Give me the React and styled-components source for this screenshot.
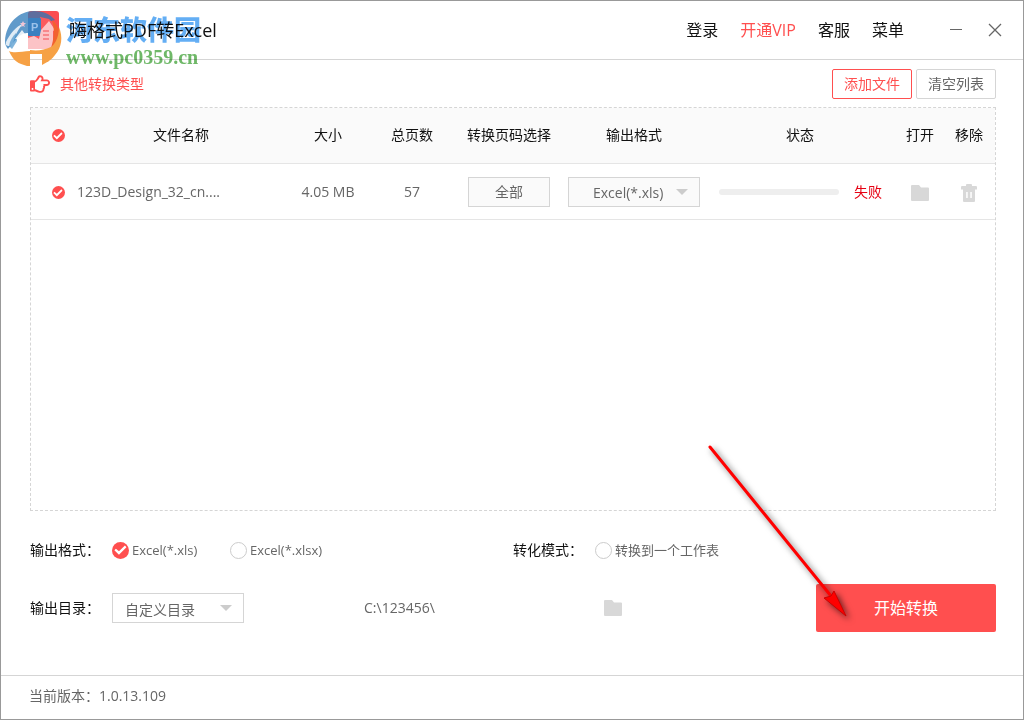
import React, { useState } from 'react';
import styled, { createGlobalStyle } from 'styled-components';
import { FaRegHandPointRight } from 'react-icons/fa';

const columns = [
    { title: '文件名称' },
    { title: '大小', width: 86 },
    { title: '总页数', width: 82 },
    { title: '转换页码选择', width: 112 },
    { title: '输出格式', width: 138 },
    { title: '状态', width: 194 },
    { title: '打开', width: 46 },
    { title: '移除', width: 52 },
];

const files = [
    { id: 1, name: '123D_Design_32_cn....', size: '4.05 MB', pages: 57, progress: 0, status: '失败' },
];

const FolderIcon = () => (
    <svg width="18" height="16" viewBox="0 0 18 16" aria-hidden="true">
        <path d="M1 0h7l2 2.500h7a1 1 0 0 1 1 1V15a1 1 0 0 1-1 1H1a1 1 0 0 1-1-1V1a1 1 0 0 1 1-1z" fill="currentColor" />
    </svg>
);

const TrashIcon = () => (
    <svg width="16" height="18" viewBox="0 0 16 18" aria-hidden="true">
        <path
            fillRule="evenodd"
            d="M6 0h4a1 1 0 0 1 1 1v1h4a1 1 0 0 1 1 1v2.500h-2V17a1 1 0 0 1-1 1H3a1 1 0 0 1-1-1V5.500H0V3a1 1 0 0 1 1-1h4V1a1 1 0 0 1 1-1zM5.200 8v6h1.500V8zM9.300 8v6h1.500V8z"
            fill="currentColor"
        />
    </svg>
);

const Logo = () => (
    <svg width="62" height="58" viewBox="4 10 62 58" aria-hidden="true">
        <rect x="28" y="11" width="31" height="38" rx="3" fill="#fb4d50" />
        <path d="M5 41C6 23 19 11 34 11c9 0 16 3 21 9l-13 4-14 9C20 32 15 41 8 49c-2-2-3-5-3-8z" fill="#2b78b8" opacity=".75" />
        <path d="M6 42c4-8 9-15 18-19-6 6-9 12-11 21-2 2-5 3-7 1z" fill="#fff" opacity=".8" />
        <path d="M9 46c1-6 4-10 7-13l1 8-5 8z" fill="#4a94cc" opacity=".7" />
        <path d="M28 33l12 1V17l9 2 8 8v19a3 3 0 0 1-3 3H28z" fill="#fb5a5e" />
        <rect x="28" y="18" width="13" height="18" rx="1" fill="#3a80c0" />
        <text x="31" y="31" fontSize="11" fontWeight="bold" fontFamily="Liberation Sans, sans-serif" fill="#9cc2ea">P</text>
        <path d="M15 39l7-9 6 8v11H17V39z" fill="#fff" opacity=".85" />
        <path d="M28 38l6-2 5 3 2-9 8-9 6 9-2 1v18H28z" fill="#fcc3c6" />
        <path d="M43 30h6v2h-6zm0 4h6v2h-6zm0 4h6v2h-6z" fill="#f8878c" />
        <path d="M52 20c6 5 8 10 7 16-1 6-4 9-8 12 3-9 4-19 1-28z" fill="#f2622f" />
        <path d="M59 27c4 10 3 20-4 28-3 4-6 6-8 7V50c7-4 12-11 12-23z" fill="#f6a145" />
        <path d="M9 51c6 3 13 0 21 0v15c-2 0-4 0-6-1-8-2-12-7-15-14z" fill="#f6a145" />
        <path d="M30 50c8 1 14 0 21-3l-2 14-7 4V54H30z" fill="#f6a145" />
        <path d="M23 21l1 2h2l-2 2 1 2-2-1-2 1 1-2-2-2h2z" fill="#f0c4d4" />
    </svg>
);

// red marker pointing at the start button
const Pointer = () => (
    <PointerSvg width="150" height="184" viewBox="0 0 150 184" aria-hidden="true">
        <path d="M7 6L128 155" stroke="#f00" strokeWidth="3" strokeLinecap="round" />
        <path d="M143 175l-22-18 7-2 3-5z" fill="#f00" stroke="#c00" />
    </PointerSvg>
);

const App = () => {
    const [format, setFormat] = useState('xls');
    const [single, setSingle] = useState(false);

    return (
        <Window>
            <GlobalStyle />
            <Header>
                <Brand>
                    <Logo />
                    <Title>嗨格式PDF转Excel</Title>
                    <Watermark>
                        <b>河东软件园</b>
                        <span>www.pc0359.cn</span>
                    </Watermark>
                </Brand>
                <Nav>
                    <NavLink href="#login">登录</NavLink>
                    <NavLink href="#vip" $accent>开通VIP</NavLink>
                    <NavLink href="#service">客服</NavLink>
                    <NavLink href="#menu">菜单</NavLink>
                </Nav>
                <WindowButtons>
                    <IconButton aria-label="最小化">
                        <svg width="14" height="14" viewBox="0 0 14 14">
                            <path d="M1 6.500h12" stroke="#666" />
                        </svg>
                    </IconButton>
                    <IconButton aria-label="关闭">
                        <svg width="14" height="14" viewBox="0 0 14 14">
                            <path d="M1 1l12 12M13 1L1 13" stroke="#666" strokeWidth="1.300" />
                        </svg>
                    </IconButton>
                </WindowButtons>
            </Header>

            <Toolbar>
                <OtherTypes href="#types">
                    <FaRegHandPointRight size={20} />
                    其他转换类型
                </OtherTypes>
                <ToolButton $accent>添加文件</ToolButton>
                <ToolButton>清空列表</ToolButton>
            </Toolbar>

            <FileList>
                <Table>
                    <thead>
                        <tr>
                            <Th $width={46}>
                                <Check type="checkbox" defaultChecked aria-label="全选" />
                            </Th>
                            {columns.map((col) => (
                                <Th key={col.title} $width={col.width}>{col.title}</Th>
                            ))}
                        </tr>
                    </thead>
                    <tbody>
                        {files.map((file) => (
                            <tr key={file.id}>
                                <Td>
                                    <Check type="checkbox" defaultChecked aria-label={file.name} />
                                </Td>
                                <Td $left>{file.name}</Td>
                                <Td>{file.size}</Td>
                                <Td>{file.pages}</Td>
                                <Td>
                                    <RangeButton>全部</RangeButton>
                                </Td>
                                <Td>
                                    <SelectBox>
                                        <Select $filled aria-label="输出格式">
                                            <option>Excel(*.xls)</option>
                                            <option>Excel(*.xlsx)</option>
                                        </Select>
                                    </SelectBox>
                                </Td>
                                <Td>
                                    <Status>
                                        <Track>
                                            <Fill style={{ width: `${file.progress}%` }} />
                                        </Track>
                                        {file.status}
                                    </Status>
                                </Td>
                                <Td>
                                    <IconButton aria-label="打开"><FolderIcon /></IconButton>
                                </Td>
                                <Td>
                                    <IconButton aria-label="移除"><TrashIcon /></IconButton>
                                </Td>
                            </tr>
                        ))}
                    </tbody>
                </Table>
            </FileList>

            <Settings>
                <OptionRow>
                    <Group>
                        <Caption>输出格式：</Caption>
                        <Option>
                            <Radio type="radio" name="format" checked={format === 'xls'} onChange={() => setFormat('xls')} />
                            Excel(*.xls)
                        </Option>
                        <Option>
                            <Radio type="radio" name="format" checked={format === 'xlsx'} onChange={() => setFormat('xlsx')} />
                            Excel(*.xlsx)
                        </Option>
                    </Group>
                    <Group>
                        <Caption>转化模式：</Caption>
                        <Option>
                            <Radio type="radio" name="mode" checked={single} onChange={() => setSingle(true)} />
                            转换到一个工作表
                        </Option>
                    </Group>
                </OptionRow>
                <OutputRow>
                    <Caption as="label" htmlFor="folder">输出目录：</Caption>
                    <SelectBox>
                        <Select id="folder">
                            <option>自定义目录</option>
                            <option>原文件目录</option>
                        </Select>
                    </SelectBox>
                    <Path>C:\123456\</Path>
                    <IconButton aria-label="选择目录"><FolderIcon /></IconButton>
                    <StartButton>
                        开始转换
                        <Pointer />
                    </StartButton>
                </OutputRow>
            </Settings>

            <Footer>当前版本：1.0.13.109</Footer>
        </Window>
    );
};

const GlobalStyle = createGlobalStyle`
    * {
        box-sizing: border-box;
    }
    body {
        margin: 0;
        background: #fff;
    }
    body, button, select, input {
        font-family: "Open Sans", "Noto Sans CJK SC", sans-serif;
        font-size: 14px;
    }
    button {
        cursor: pointer;
    }
`;

const Window = styled.div`
    display: flex;
    flex-direction: column;
    min-height: 100vh;
    border: 1px solid #999;
    color: #666;
    line-height: 20px;
`;

const Header = styled.header`
    display: flex;
    align-items: center;
    height: 59px;
    padding: 0 21px 0 3px;
    border-bottom: 1px solid #d5d5d5;
`;

const Brand = styled.div`
    position: relative;
    display: flex;
    align-items: center;
    flex: 1;
    height: 58px;

    > svg {
        position: absolute;
        top: 9px;
        left: 0;
    }
`;

const Title = styled.h1`
    margin: 0 0 0 65px;
    font-size: 18px;
    font-weight: 400;
    line-height: 24px;
    color: #111;
`;

const Watermark = styled.div`
    position: absolute;
    top: 11px;
    left: 62px;
    display: flex;
    flex-direction: column;
    opacity: 0.75;
    mix-blend-mode: multiply;
    pointer-events: none;

    b {
        font: 900 27px/34px "Noto Sans CJK SC", sans-serif;
        color: #2f93f0;
    }
    span {
        font: bold 20px/22px "Liberation Serif", serif;
        color: #3ea035;
    }
`;

const Nav = styled.nav`
    display: flex;
    gap: 22px;
`;

const NavLink = styled.a`
    font-size: 16px;
    line-height: 24px;
    text-decoration: none;
    color: ${(props) => (props.$accent ? '#ff4f4f' : '#111')};
`;

const WindowButtons = styled.div`
    display: flex;
    gap: 25px;
    margin-left: 45px;
`;

const IconButton = styled.button`
    display: inline-flex;
    padding: 0;
    border: 0;
    background: none;
    color: #d8d8d8;
    vertical-align: middle;
`;

const Toolbar = styled.div`
    display: flex;
    align-items: center;
    gap: 4px;
    height: 47px;
    padding: 0 27px 0 29px;
`;

const OtherTypes = styled.a`
    display: flex;
    align-items: center;
    gap: 10px;
    margin-right: auto;
    text-decoration: none;
    color: #ff4f4f;
`;

const ToolButton = styled.button`
    width: 80px;
    height: 30px;
    padding: 0 0 2px;
    border: 1px solid ${(props) => (props.$accent ? '#ff4f4f' : '#d5d5d5')};
    border-radius: 2px;
    background: #fff;
    color: ${(props) => (props.$accent ? '#ff4f4f' : '#666')};
`;

const FileList = styled.section`
    flex: 1;
    margin: 0 27px 0 29px;
    border: 1px dashed #d5d5d5;
`;

const Table = styled.table`
    width: 100%;
    table-layout: fixed;
    border-collapse: separate;
    border-spacing: 0;
`;

const Th = styled.th`
    width: ${(props) => (props.$width ? `${props.$width}px` : 'auto')};
    height: 56px;
    padding: 0 0 2px;
    border-bottom: 1px solid #e5e5e5;
    background: #fafafa;
    color: #111;
    font-weight: 400;
    white-space: nowrap;

    &:first-child {
        padding-left: 8px;
    }
`;

const Td = styled.td`
    height: 56px;
    padding: 0;
    border-bottom: 1px solid #e5e5e5;
    text-align: ${(props) => (props.$left ? 'left' : 'center')};
    white-space: nowrap;

    &:first-child {
        padding-left: 8px;
    }
`;

const Check = styled.input`
    appearance: none;
    display: inline-grid;
    width: 13px;
    height: 13px;
    margin: 0;
    border: 1px solid #ccc;
    border-radius: 50%;
    vertical-align: middle;

    &:checked {
        border: 0;
        background: #ff4f4f;
    }
    &:checked::before {
        content: '';
        background: #fff;
        clip-path: polygon(14% 52%, 23% 42%, 41% 58%, 76% 24%, 85% 34%, 41% 78%);
    }
`;

const Radio = styled(Check)`
    width: 17px;
    height: 17px;
`;

const RangeButton = styled.button`
    width: 82px;
    height: 30px;
    padding: 0 0 2px;
    border: 1px solid #d5d5d5;
    background: #fafafa;
    color: #666;
`;

const SelectBox = styled.span`
    position: relative;
    display: inline-block;
    width: 132px;
    height: 30px;
    vertical-align: middle;

    &::after {
        content: '';
        position: absolute;
        top: 12px;
        right: 12px;
        border: 6px solid transparent;
        border-top-color: #ccc;
        border-bottom: 0;
        pointer-events: none;
    }
`;

const Select = styled.select`
    appearance: none;
    width: 100%;
    height: 100%;
    padding: 2px 0 0 ${(props) => (props.$filled ? 24 : 12)}px;
    border: 1px solid #d5d5d5;
    border-radius: 0;
    background: ${(props) => (props.$filled ? '#fafafa' : '#fff')};
    color: #666;
`;

const Status = styled.div`
    display: flex;
    align-items: center;
    gap: 15px;
    padding-left: 16px;
    color: #e60012;
`;

const Track = styled.div`
    width: 120px;
    height: 6px;
    border-radius: 3px;
    background: #eee;
    overflow: hidden;
`;

const Fill = styled.div`
    height: 100%;
    background: #ff4f4f;
`;

const Settings = styled.section`
    padding: 28px 27px 43px 29px;
`;

const OptionRow = styled.div`
    display: flex;
    height: 22px;
    margin-bottom: 23px;
`;

const Group = styled.div`
    display: flex;
    align-items: center;
    flex: 1;
`;

const Caption = styled.span`
    width: 82px;
    color: #111;
    white-space: nowrap;
`;

const Option = styled.label`
    display: flex;
    align-items: center;
    gap: 3px;
    min-width: 118px;
    font-size: 13px;
    white-space: nowrap;
`;

const OutputRow = styled.div`
    display: flex;
    align-items: center;
`;

const Path = styled.span`
    width: 240px;
    margin-left: 120px;
`;

const StartButton = styled.button`
    position: relative;
    width: 180px;
    height: 48px;
    margin-left: auto;
    padding: 0 0 2px;
    border: 0;
    border-radius: 2px;
    background: #ff4f4f;
    color: #fff;
    font-size: 16px;
`;

const PointerSvg = styled.svg`
    position: absolute;
    right: 143px;
    bottom: 7px;
    filter: drop-shadow(3px 3px 3px rgba(0, 0, 0, 0.6));
    pointer-events: none;
`;

const Footer = styled.footer`
    padding: 10px 28px 13px;
    border-top: 1px solid #d5d5d5;
`;

export default App;
